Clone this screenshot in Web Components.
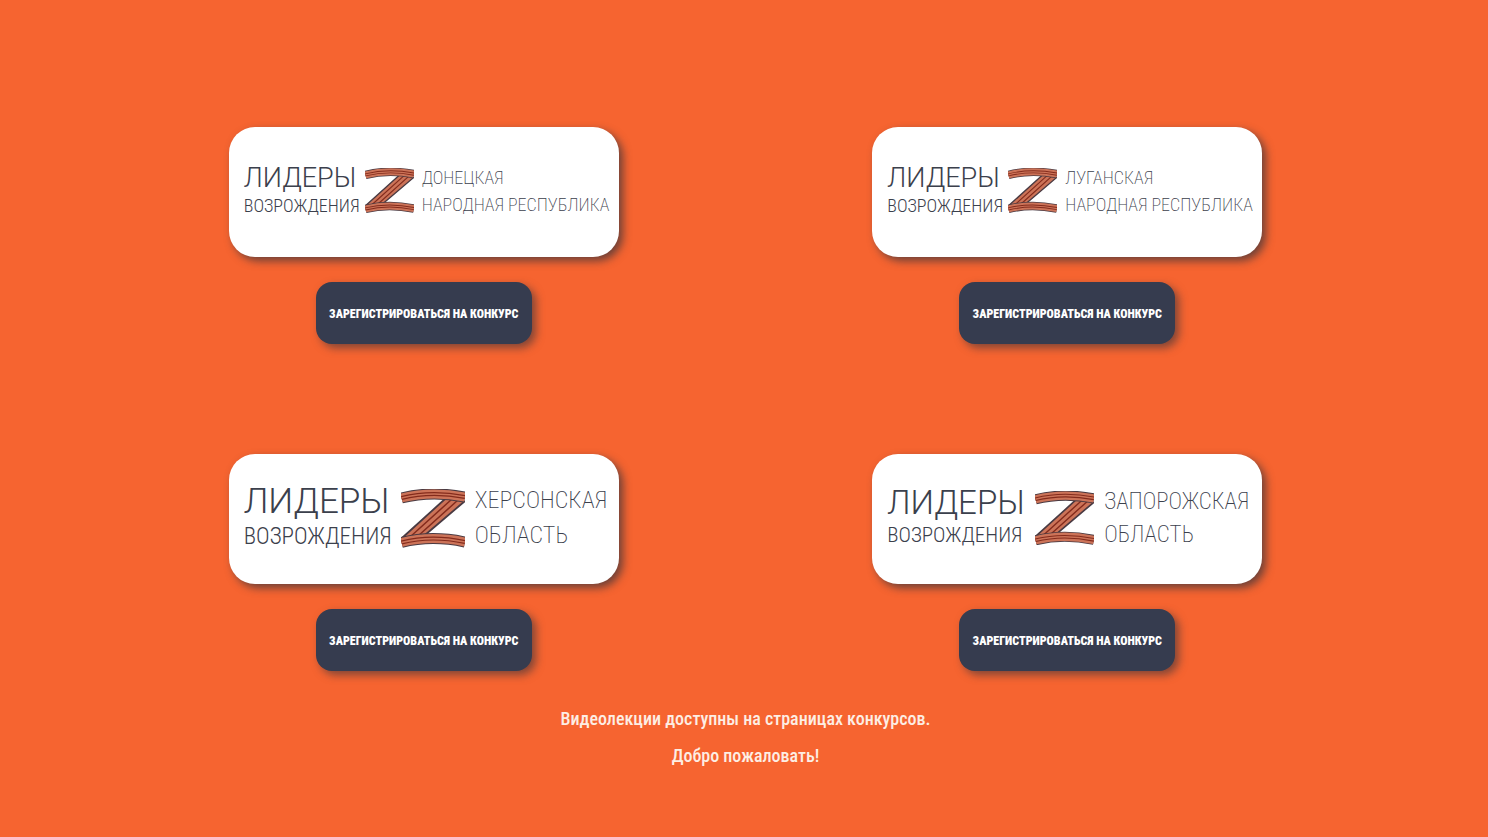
<!DOCTYPE html>
<html lang="ru">
<head>
  <meta charset="UTF-8">
  <meta name="viewport" content="width=device-width, initial-scale=1">
  <title>Лидеры возрождения</title>
  <style>
    body {
      margin: 0;
      min-height: 100vh;
      background-color: #f66430;
      color: #fff;
      font-family: "Roboto Condensed", "Liberation Sans Narrow", Roboto, sans-serif;
    }
  </style>
</head>
<body>
  <contest-page>
    <contest-card>
      <contest-logo slot="logo">
        <span slot="region">Донецкая</span>
        <span slot="region">народная республика</span>
      </contest-logo>
    </contest-card>
    <contest-card>
      <contest-logo slot="logo">
        <span slot="region">Луганская</span>
        <span slot="region">народная республика</span>
      </contest-logo>
    </contest-card>
    <contest-card>
      <contest-logo slot="logo" size="large">
        <span slot="region">Херсонская</span>
        <span slot="region">область</span>
      </contest-logo>
    </contest-card>
    <contest-card>
      <contest-logo slot="logo" size="medium">
        <span slot="region">Запорожская</span>
        <span slot="region">область</span>
      </contest-logo>
    </contest-card>
    <p slot="note">Видеолекции доступны на страницах конкурсов.</p>
    <p slot="note">Добро пожаловать!</p>
  </contest-page>

  <script>
    class ContestPage extends HTMLElement {
      constructor() {
        super();
        this.attachShadow({ mode: 'open' });
      }

      connectedCallback() {
        this.shadowRoot.innerHTML = `
          <style>
            :host {
              display: block;
              padding: 127px 99px 24px 102px;
            }
            main {
              display: grid;
              grid-template-columns: repeat(2, 1fr);
              row-gap: 110px;
            }
            footer {
              margin-top: 29px;
              text-align: center;
              color: #fdeee4;
              font-size: 18px;
              font-weight: 500;
              line-height: 37px;
            }
            ::slotted(p) {
              margin: 0;
            }
            @media (max-width: 1020px) {
              :host {
                padding: 40px 16px;
              }
              main {
                grid-template-columns: 1fr;
                row-gap: 48px;
              }
            }
          </style>
          <main><slot></slot></main>
          <footer><slot name="note"></slot></footer>
        `;
      }
    }

    class ContestCard extends HTMLElement {
      constructor() {
        super();
        this.attachShadow({ mode: 'open' });
      }

      connectedCallback() {
        this.shadowRoot.innerHTML = `
          <style>
            :host {
              display: flex;
              flex-direction: column;
              align-items: center;
              gap: 25px;
            }
            .panel {
              box-sizing: border-box;
              width: 390px;
              min-height: 130px;
              padding: 0 14px 2px 15px;
              display: flex;
              align-items: center;
              border-radius: 26px;
              background-color: #fff;
              box-shadow: 4px 4px 8px rgba(50, 50, 60, .7);
            }
            button {
              height: 62px;
              min-width: 216px;
              padding: 2px 10px 0;
              border: none;
              border-radius: 16px;
              background-color: #363c4f;
              box-shadow: 4px 4px 8px rgba(50, 50, 60, .6);
              color: #fff;
              font-family: inherit;
              font-size: 12px;
              font-weight: 900;
              line-height: 20px;
              text-transform: uppercase;
              white-space: nowrap;
              cursor: pointer;
            }
          </style>
          <div class="panel"><slot name="logo"></slot></div>
          <button type="button">Зарегистрироваться на конкурс</button>
        `;
      }
    }

    class ContestLogo extends HTMLElement {
      constructor() {
        super();
        this.attachShadow({ mode: 'open' });
      }

      connectedCallback() {
        this.shadowRoot.innerHTML = `
          <style>
            :host {
              --columns: 113px 49px 184px;
              --gap: 8px;
              --title: 27px;
              --subtitle: 18px;
              --region: 18px;
              --line: 27px;
              flex: 1;
              display: grid;
              grid-template-columns: var(--columns);
              column-gap: var(--gap);
              align-items: center;
              color: #3b404c;
              font-weight: 300;
              line-height: var(--line);
              text-transform: uppercase;
              white-space: nowrap;
            }
            :host([size="large"]) {
              --columns: 147px 64px 130px;
              --gap: 10px;
              --title: 35px;
              --subtitle: 23px;
              --region: 24px;
              --line: 35px;
            }
            :host([size="medium"]) {
              --columns: 138px 59px 144px;
              --gap: 10px;
              --title: 33px;
              --subtitle: 21px;
              --region: 23px;
              --line: 33px;
            }
            .brand {
              display: flex;
              flex-direction: column;
              padding-top: 2px;
            }
            .title {
              font-family: Roboto, sans-serif;
              font-size: var(--title);
            }
            .subtitle {
              font-size: var(--subtitle);
            }
            .region {
              display: flex;
              flex-direction: column;
              font-size: var(--region);
              font-weight: 200;
            }
            svg {
              display: block;
              width: 100%;
            }
            .edge { stroke: #493a42; stroke-width: 11; }
            .ribbon { stroke: #cc7358; stroke-width: 9; }
            .stripe { stroke: #842b1c; stroke-width: 4; }
            .core { stroke: #cc7358; stroke-width: 1.6; }
          </style>
          <div class="brand">
            <span class="title">Лидеры</span>
            <span class="subtitle">возрождения</span>
          </div>
          <svg viewBox="0 0 64 59" fill="none" aria-hidden="true">
            <path d="M44 10 L64 12 L24 46 L1 49 Z" fill="#cc7358"/>
            <path d="M44 10 L1 49 M64 12 L24 46" stroke="#493a42" stroke-width="1.8"/>
            <path d="M51 10 L9 48 M57 11 L17 47" stroke="#842b1c" stroke-width="1.5"/>
            <g class="edge"><path d="M0.5 9 Q30 1.5 64 8"/><path d="M0.5 53.5 Q30 46 64 53"/></g>
            <g class="ribbon"><path d="M0.5 9 Q30 1.5 64 8"/><path d="M0.5 53.5 Q30 46 64 53"/></g>
            <g class="stripe"><path d="M0.5 9 Q30 1.5 64 8"/><path d="M0.5 53.5 Q30 46 64 53"/></g>
            <g class="core"><path d="M0.5 9 Q30 1.5 64 8"/><path d="M0.5 53.5 Q30 46 64 53"/></g>
          </svg>
          <div class="region"><slot name="region"></slot></div>
        `;
      }
    }

    customElements.define('contest-page', ContestPage);
    customElements.define('contest-card', ContestCard);
    customElements.define('contest-logo', ContestLogo);
  </script>
</body>
</html>
